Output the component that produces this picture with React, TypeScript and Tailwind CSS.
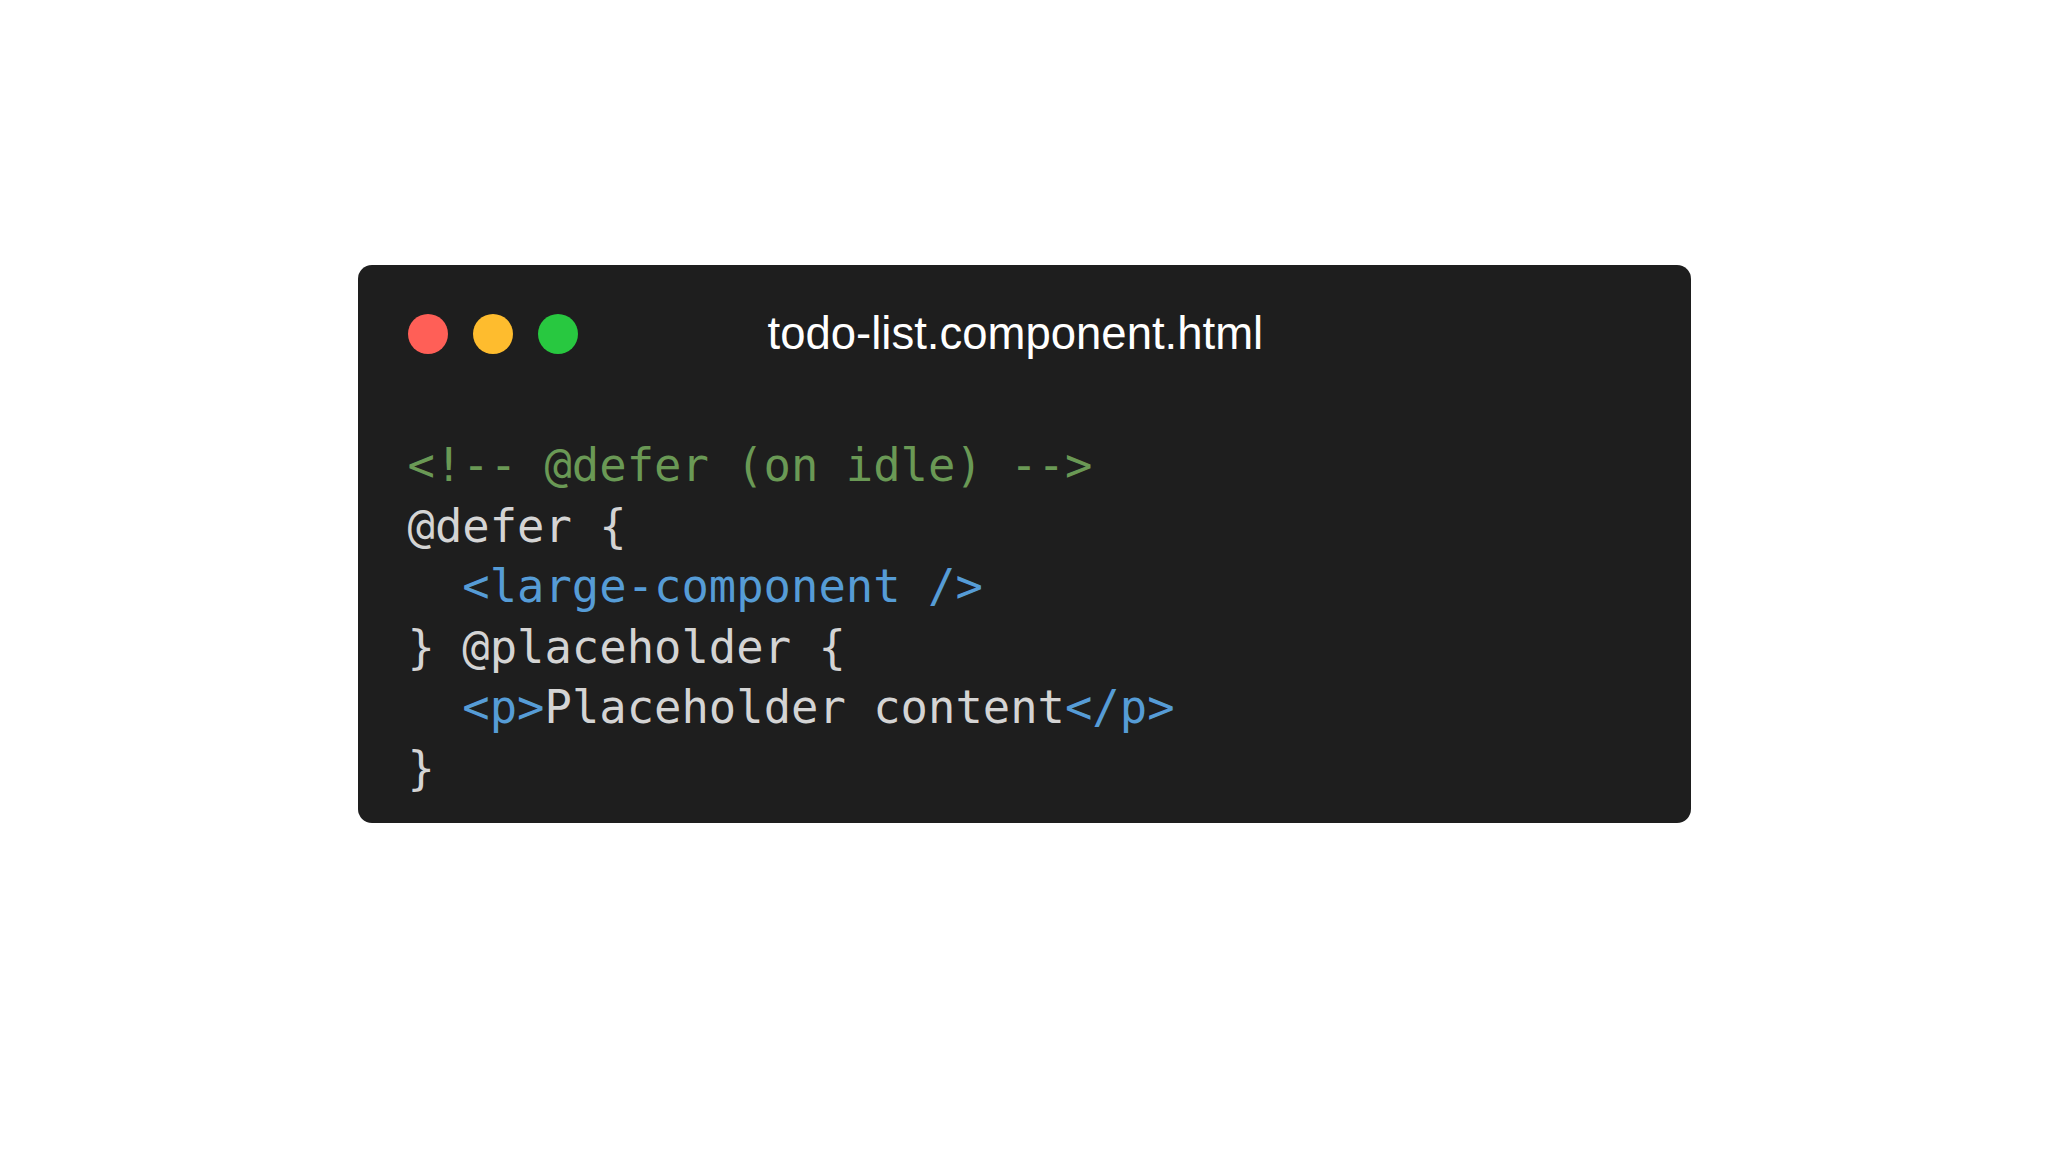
const Dot = ({ color }: { color: string }) => (
    <span className={`block w-[40px] h-[40px] rounded-full ${color}`} />
);

export default function App() {
    return (
        <div className="w-full h-screen bg-white flex justify-center pt-[265px]">
            <div className="w-[1333px] h-[558px] bg-[#1e1e1e] rounded-[14px] pl-[50px] pt-[49px]">
                <div className="flex items-center h-[40px]">
                    <div className="flex gap-[25px]">
                        <Dot color="bg-[#ff5f57]" />
                        <Dot color="bg-[#febc2e]" />
                        <Dot color="bg-[#28c840]" />
                    </div>
                    <p className="ml-[190px] text-[45.5px] leading-none text-white font-['Liberation_Sans',Arial,sans-serif]">
                        todo-list.component.html
                    </p>
                </div>
                <pre className="mt-[82px] text-[45.5px] leading-[60.5px] text-[#d4d4d4] font-['DejaVu_Sans_Mono',monospace]">
                    <div className="text-[#6a9955]">&lt;!-- @defer (on idle) --&gt;</div>
                    <div>@defer {"{"}</div>
                    <div>  <span className="text-[#569cd6]">&lt;large-component /&gt;</span></div>
                    <div>{"}"} @placeholder {"{"}</div>
                    <div>  <span className="text-[#569cd6]">&lt;p&gt;</span>Placeholder content<span className="text-[#569cd6]">&lt;/p&gt;</span></div>
                    <div>{"}"}</div>
                </pre>
            </div>
        </div>
    );
}
